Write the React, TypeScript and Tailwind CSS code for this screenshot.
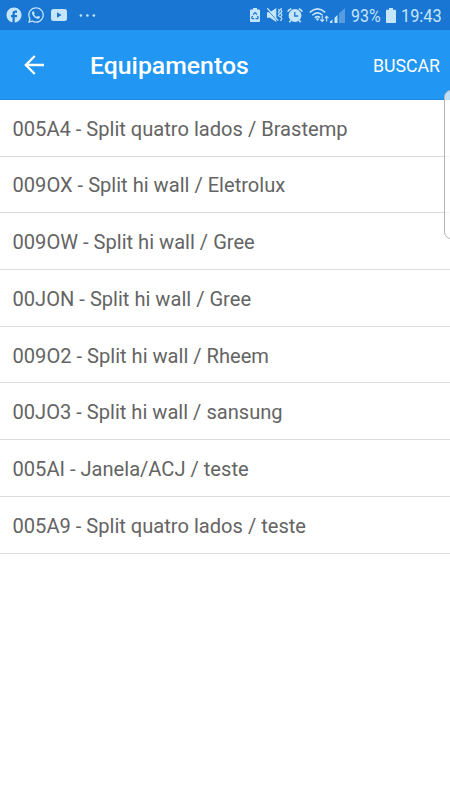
import { MdFacebook } from 'react-icons/md';
import { FaWhatsapp } from 'react-icons/fa';

const EQUIPMENT = [
  { code: '005A4', name: 'Split quatro lados', brand: 'Brastemp' },
  { code: '009OX', name: 'Split hi wall', brand: 'Eletrolux' },
  { code: '009OW', name: 'Split hi wall', brand: 'Gree' },
  { code: '00JON', name: 'Split hi wall', brand: 'Gree' },
  { code: '009O2', name: 'Split hi wall', brand: 'Rheem' },
  { code: '00JO3', name: 'Split hi wall', brand: 'sansung' },
  { code: '005AI', name: 'Janela/ACJ', brand: 'teste' },
  { code: '005A9', name: 'Split quatro lados', brand: 'teste' },
];

function YoutubeIcon() {
  return (
    <svg width="16" height="12" viewBox="0 0 16 12" className="ml-[6px]">
      <rect width="16" height="12" rx="2.5" fill="currentColor" />
      <path d="M6 3.2v5.6l4.6-2.8z" fill="#1976d2" />
    </svg>
  );
}

function BatterySaverIcon() {
  return (
    <svg width="10" height="14" viewBox="0 0 10 14">
      <path d="M3 0h4v1.6h2.2q.8 0 .8.8v10.8q0 .8-.8.8H.8q-.8 0-.8-.8V2.4q0-.8.8-.8H3z" fill="currentColor" />
      <g fill="none" stroke="#1976d2" strokeWidth="1.2">
        <path d="M3.2 6.8 4.4 4.9h1.2l1.2 1.9M7.4 8l.9 1.6-.6 1H5.5M4.2 10.6H2.3l-.6-1L2.6 8" />
      </g>
    </svg>
  );
}

function VibrateMuteIcon() {
  return (
    <svg width="16" height="16" viewBox="0 0 16 16" className="ml-[7px]">
      <path d="M0 5.2h3L9.3 1v14L3 10.8H0z" fill="currentColor" />
      <path d="M.3 2.6 11 14.6" stroke="#1976d2" strokeWidth="1" />
      <path d="M.2 1.1 11.2 13.6" stroke="currentColor" strokeWidth="1.3" />
      <path d="m11.4 2 1.2 1.5-1.2 1.6 1.2 1.6-1.2 1.6 1.2 1.6M14.6 1l-1 1.6 1.3 1.8-1.3 1.8L14.9 8l-1.3 1.8 1.3 1.8-1.3 2.4" fill="none" stroke="currentColor" strokeWidth="1.2" />
    </svg>
  );
}

function AlarmIcon() {
  return (
    <svg width="16" height="15" viewBox="0 0 16 15" className="ml-[4px]">
      <circle cx="8" cy="7.5" r="6.4" fill="currentColor" />
      <path d="M.7 3.8Q1.6 1.4 4.3.8M15.3 3.8Q14.4 1.4 11.7.8M3.9 12.2 2.4 14.3M12.1 12.2l1.5 2.1" fill="none" stroke="currentColor" strokeWidth="1.6" />
      <path d="M7.8 4v4h3.4" fill="none" stroke="#1976d2" strokeWidth="1.3" />
    </svg>
  );
}

function WifiIcon() {
  return (
    <svg width="21" height="16" viewBox="0 0 21 16" className="ml-[6px]">
      <g fill="none" stroke="currentColor" strokeWidth="1.5">
        <path d="M.8 5.4Q8.5-1.6 16.2 5.4M3.3 8.2Q8.5 3.5 13.7 8.2M5.8 10.8Q8.5 8.6 11 10.6" />
        <path d="M13.2 8.9v5.4m-1.8-1.8 1.8 1.9 1.8-1.9M17.6 14.6V9.4m-1.8 1.8 1.8-1.9 1.8 1.9" strokeWidth="1.1" />
      </g>
      <path d="M6.7 11.8q1.8-1.2 3.6 0l-1.8 2.1z" fill="currentColor" />
    </svg>
  );
}

function SignalIcon() {
  return (
    <svg width="15" height="15" viewBox="0 0 15 15">
      <path d="M0 15v-1.4l2.4-2.2V15zM4.5 15V9.8l3-2.7V15z" fill="currentColor" />
      <path d="M9 15V5.6L15 0v15z" fill="currentColor" opacity=".35" />
    </svg>
  );
}

function StatusBar() {
  return (
    <div className="flex h-[30px] shrink-0 items-center bg-[#1976d2] text-[#c5e5fb]">
      <MdFacebook className="ml-[5px] size-[18px]" />
      <FaWhatsapp className="ml-[4px] size-[18px]" />
      <YoutubeIcon />
      <svg width="17" height="3" viewBox="0 0 17 3" className="ml-[12px]" fill="currentColor">
        <circle cx="1.9" cy="1.5" r="1.3" />
        <circle cx="8.4" cy="1.5" r="1.3" />
        <circle cx="14.9" cy="1.5" r="1.3" />
      </svg>
      <div className="ml-auto flex items-center">
        <BatterySaverIcon />
        <VibrateMuteIcon />
        <AlarmIcon />
        <WifiIcon />
        <SignalIcon />
        <span className="ml-[6px] w-[30px] origin-left scale-x-[0.84] text-[19px] leading-none whitespace-nowrap">93%</span>
        <svg width="10" height="15" viewBox="0 0 10 15" className="ml-[5px]">
          <path d="M3 0h4v1.7h2.2q.8 0 .8.8v11.7q0 .8-.8.8H.8q-.8 0-.8-.8V2.5q0-.8.8-.8H3z" fill="currentColor" />
        </svg>
        <span className="ml-[5px] w-[49px] origin-left scale-x-[0.86] text-[19px] leading-none whitespace-nowrap">19:43</span>
      </div>
    </div>
  );
}

function Header() {
  return (
    <header className="flex h-[70px] shrink-0 items-center border-b border-[#1d87e0] bg-[#2196f3] text-white">
      <button className="ml-6" aria-label="Voltar">
        <svg width="20" height="20" viewBox="0 0 20 20" fill="none" stroke="currentColor" strokeWidth="2.3">
          <path d="M20 10H1.8M10.8 1l-9 9 9 9" />
        </svg>
      </button>
      <h1 className="ml-[46px] pt-[3px] text-[24.8px] leading-none font-medium">Equipamentos</h1>
      <button className="mr-[10px] ml-auto pt-[4px] text-[17.7px] leading-none">BUSCAR</button>
    </header>
  );
}

export default function App() {
  return (
    <div className="relative flex h-[800px] w-[450px] flex-col overflow-hidden bg-white font-[Roboto,sans-serif]">
      <StatusBar />
      <Header />
      <ul>
        {EQUIPMENT.map(item => (
          <li
            key={item.code}
            className="flex h-[56.7px] items-center border-b border-[#dcdcdc] pt-[2px] pl-[12.5px] text-[20.1px] text-[#646464]"
          >
            {item.code} - {item.name} / {item.brand}
          </li>
        ))}
      </ul>

      {/* Edge panel handle */}
      <div className="absolute top-[90px] -right-2 h-[149px] w-[14px] rounded-[7px] border border-[#b4b4b4] bg-white/70" />
    </div>
  );
}
